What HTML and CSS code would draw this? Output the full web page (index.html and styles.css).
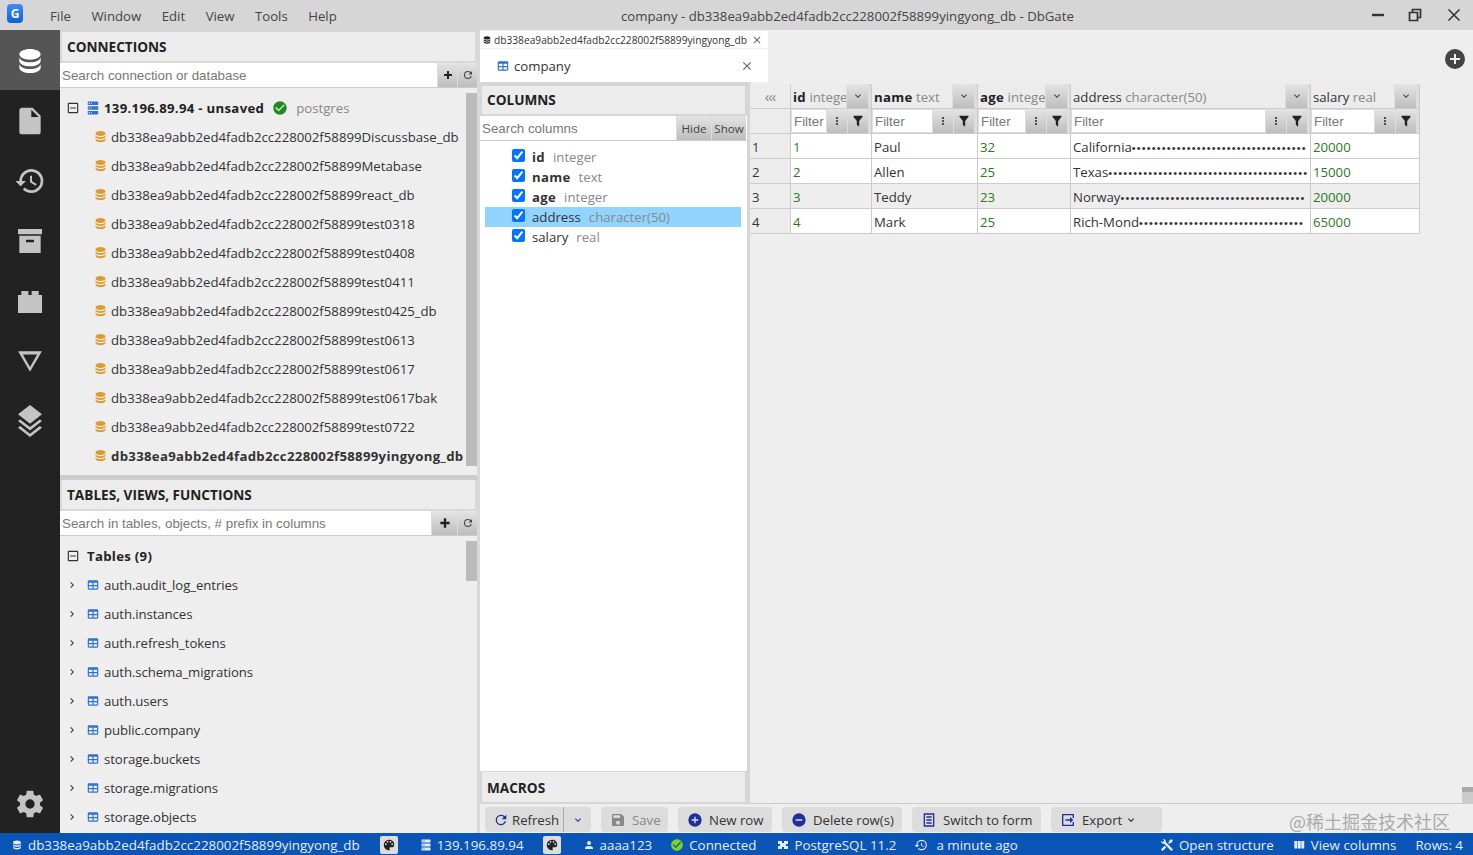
FILE: index.html
```html
<!DOCTYPE html>
<html lang="en">

<head>
    <meta charset="UTF-8">
    <title>company - DbGate</title>
    <link rel="stylesheet" href="styles.css">
</head>

<body>
    <svg class="sprite" xmlns="http://www.w3.org/2000/svg">
        <symbol id="i-database" viewBox="0 0 24 24"><path d="M12,3C7.58,3 4,4.79 4,7C4,9.21 7.58,11 12,11C16.42,11 20,9.21 20,7C20,4.79 16.42,3 12,3M4,9V12C4,14.21 7.58,16 12,16C16.42,16 20,14.21 20,12V9C20,11.21 16.42,13 12,13C7.58,13 4,11.21 4,9M4,14V17C4,19.21 7.58,21 12,21C16.42,21 20,19.21 20,17V14C20,16.21 16.42,18 12,18C7.58,18 4,16.21 4,14Z"/></symbol>
        <symbol id="i-file" viewBox="0 0 24 24"><path d="M13,9V3.5L18.5,9M6,2C4.89,2 4,2.89 4,4V20A2,2 0 0,0 6,22H18A2,2 0 0,0 20,20V8L14,2H6Z"/></symbol>
        <symbol id="i-history" viewBox="0 0 24 24"><path d="M13.5,8H12V13L16.28,15.54L17,14.33L13.5,12.25V8M13,3A9,9 0 0,0 4,12H1L4.96,16.03L9,12H6A7,7 0 0,1 13,5A7,7 0 0,1 20,12A7,7 0 0,1 13,19C11.07,19 9.32,18.21 8.06,16.94L6.64,18.36C8.27,20 10.5,21 13,21A9,9 0 0,0 22,12A9,9 0 0,0 13,3"/></symbol>
        <symbol id="i-archive" viewBox="0 0 24 24"><path d="M3,3H21V7H3V3M4,8H20V21H4V8M9.5,11A0.5,0.5 0 0,0 9,11.5V13H15V11.5A0.5,0.5 0 0,0 14.5,11H9.5Z"/></symbol>
        <symbol id="i-brick" viewBox="0 0 24 24"><path d="M3 7.5H5.5V4.5H10.8V7.5H13.2V4.5H18.5V7.5H21V21H3Z"/></symbol>
        <symbol id="i-triangle" viewBox="0 0 24 24"><path d="M12,22L1,3H23M12,17.5L18.6,6H5.4"/></symbol>
        <symbol id="i-layers" viewBox="0 0 24 24"><path d="M12 14L3 7L12 0L21 7Z M12 16.54L19.37 10.8L21 12.07L12 19.07L3 12.07L4.62 10.81Z M12 21.47L19.37 15.73L21 17L12 24L3 17L4.62 15.74Z"/></symbol>
        <symbol id="i-cog" viewBox="0 0 24 24"><path d="M12,15.5A3.5,3.5 0 0,1 8.5,12A3.5,3.5 0 0,1 12,8.5A3.5,3.5 0 0,1 15.5,12A3.5,3.5 0 0,1 12,15.5M19.43,12.97C19.47,12.65 19.5,12.33 19.5,12C19.5,11.67 19.47,11.34 19.43,11L21.54,9.37C21.73,9.22 21.78,8.95 21.66,8.73L19.66,5.27C19.54,5.05 19.27,4.96 19.05,5.05L16.56,6.05C16.04,5.66 15.5,5.32 14.87,5.07L14.5,2.42C14.46,2.18 14.25,2 14,2H10C9.75,2 9.54,2.18 9.5,2.42L9.13,5.07C8.5,5.32 7.96,5.66 7.44,6.05L4.95,5.05C4.73,4.96 4.46,5.05 4.34,5.27L2.34,8.73C2.21,8.95 2.27,9.22 2.46,9.37L4.57,11C4.53,11.34 4.5,11.67 4.5,12C4.5,12.33 4.53,12.65 4.57,12.97L2.46,14.63C2.27,14.78 2.21,15.05 2.34,15.27L4.34,18.73C4.46,18.95 4.73,19.03 4.95,18.95L7.44,17.94C7.96,18.34 8.5,18.68 9.13,18.93L9.5,21.58C9.54,21.82 9.75,22 10,22H14C14.25,22 14.46,21.82 14.5,21.58L14.87,18.93C15.5,18.67 16.04,18.34 16.56,17.94L19.05,18.95C19.27,19.03 19.54,18.95 19.66,18.73L21.66,15.27C21.78,15.05 21.73,14.78 21.54,14.63L19.43,12.97Z"/></symbol>
        <symbol id="i-table" viewBox="0 0 24 24"><path d="M5,4H19A2,2 0 0,1 21,6V18A2,2 0 0,1 19,20H5A2,2 0 0,1 3,18V6A2,2 0 0,1 5,4M5,8V12H11V8H5M13,8V12H19V8H13M5,14V18H11V14H5M13,14V18H19V14H13Z"/></symbol>
        <symbol id="i-server" viewBox="0 0 24 24"><path d="M4,1H20A1,1 0 0,1 21,2V6A1,1 0 0,1 20,7H4A1,1 0 0,1 3,6V2A1,1 0 0,1 4,1M4,9H20A1,1 0 0,1 21,10V14A1,1 0 0,1 20,15H4A1,1 0 0,1 3,14V10A1,1 0 0,1 4,9M4,17H20A1,1 0 0,1 21,18V22A1,1 0 0,1 20,23H4A1,1 0 0,1 3,22V18A1,1 0 0,1 4,17M9,5H10V3H9V5M9,13H10V11H9V13M9,21H10V19H9V21M5,3V5H7V3H5M5,11V13H7V11H5M5,19V21H7V19H5Z"/></symbol>
        <symbol id="i-check" viewBox="0 0 24 24"><path d="M12 2C6.5 2 2 6.5 2 12S6.5 22 12 22 22 17.5 22 12 17.5 2 12 2M10 17L5 12L6.41 10.59L10 14.17L17.59 6.58L19 8L10 17Z"/></symbol>
        <symbol id="i-minusbox" viewBox="0 0 24 24"><path d="M19,3H5C3.89,3 3,3.89 3,5V19A2,2 0 0,0 5,21H19A2,2 0 0,0 21,19V5C21,3.89 20.1,3 19,3M19,5V19H5V5H19M17,11H7V13H17V11Z"/></symbol>
        <symbol id="i-right" viewBox="0 0 24 24"><path d="M8.59,16.58L13.17,12L8.59,7.41L10,6L16,12L10,18L8.59,16.58Z"/></symbol>
        <symbol id="i-down" viewBox="0 0 24 24"><path d="M7.41,8.58L12,13.17L16.59,8.58L18,10L12,16L6,10L7.41,8.58Z"/></symbol>
        <symbol id="i-plus" viewBox="0 0 24 24"><path d="M20 14H14V20H10V14H4V10H10V4H14V10H20V14Z"/></symbol>
        <symbol id="i-refresh" viewBox="0 0 24 24"><path d="M17.65,6.35C16.2,4.9 14.21,4 12,4A8,8 0 0,0 4,12A8,8 0 0,0 12,20C15.73,20 18.84,17.45 19.73,14H17.65C16.83,16.33 14.61,18 12,18A6,6 0 0,1 6,12A6,6 0 0,1 12,6C13.66,6 15.14,6.69 16.22,7.78L13,11H20V4L17.65,6.35Z"/></symbol>
        <symbol id="i-dots" viewBox="0 0 24 24"><path d="M12,16A2,2 0 0,1 14,18A2,2 0 0,1 12,20A2,2 0 0,1 10,18A2,2 0 0,1 12,16M12,10A2,2 0 0,1 14,12A2,2 0 0,1 12,14A2,2 0 0,1 10,12A2,2 0 0,1 12,10M12,4A2,2 0 0,1 14,6A2,2 0 0,1 12,8A2,2 0 0,1 10,6A2,2 0 0,1 12,4Z"/></symbol>
        <symbol id="i-filter" viewBox="0 0 24 24"><path d="M14,12V19.88C14.04,20.18 13.94,20.5 13.71,20.71C13.32,21.1 12.69,21.1 12.3,20.71L10.29,18.7C10.06,18.47 9.96,18.16 10,17.87V12H9.97L4.21,4.62C3.87,4.19 3.95,3.56 4.38,3.22C4.57,3.08 4.78,3 5,3V3H19V3C19.22,3 19.43,3.08 19.62,3.22C20.05,3.56 20.13,4.19 19.79,4.62L14.03,12H14Z"/></symbol>
        <symbol id="i-close" viewBox="0 0 24 24"><path d="M19,6.41L17.59,5L12,10.59L6.41,5L5,6.41L10.59,12L5,17.59L6.41,19L12,13.41L17.59,19L19,17.59L13.41,12L19,6.41Z"/></symbol>
        <symbol id="i-pluscircle" viewBox="0 0 24 24"><path d="M17,13H13V17H11V13H7V11H11V7H13V11H17M12,2A10,10 0 0,0 2,12A10,10 0 0,0 12,22A10,10 0 0,0 22,12A10,10 0 0,0 12,2Z"/></symbol>
        <symbol id="i-minuscircle" viewBox="0 0 24 24"><path d="M17,13H7V11H17M12,2A10,10 0 0,0 2,12A10,10 0 0,0 12,22A10,10 0 0,0 22,12A10,10 0 0,0 12,2Z"/></symbol>
        <symbol id="i-save" viewBox="0 0 24 24"><path d="M15,9H5V5H15M12,19A3,3 0 0,1 9,16A3,3 0 0,1 12,13A3,3 0 0,1 15,16A3,3 0 0,1 12,19M17,3H5C3.89,3 3,3.9 3,5V19A2,2 0 0,0 5,21H19A2,2 0 0,0 21,19V7L17,3Z"/></symbol>
        <symbol id="i-form" viewBox="0 0 24 24"><path fill-rule="evenodd" d="M4 2H20V22H4ZM6 4V20H18V4ZM8 6.5H16V8.5H8ZM8 11H16V13H8ZM8 15.5H16V17.5H8Z"/></symbol>
        <symbol id="i-export" viewBox="0 0 24 24"><path d="M3 3H21V9H19V5H5V19H19V15H21V21H3ZM15 7.5L20 12L15 16.5V13H8V11H15Z"/></symbol>
        <symbol id="i-palette" viewBox="0 0 24 24"><path d="M17.5,12A1.5,1.5 0 0,1 16,10.5A1.5,1.5 0 0,1 17.5,9A1.5,1.5 0 0,1 19,10.5A1.5,1.5 0 0,1 17.5,12M14.5,8A1.5,1.5 0 0,1 13,6.5A1.5,1.5 0 0,1 14.5,5A1.5,1.5 0 0,1 16,6.5A1.5,1.5 0 0,1 14.5,8M9.5,8A1.5,1.5 0 0,1 8,6.5A1.5,1.5 0 0,1 9.5,5A1.5,1.5 0 0,1 11,6.5A1.5,1.5 0 0,1 9.5,8M6.5,12A1.5,1.5 0 0,1 5,10.5A1.5,1.5 0 0,1 6.5,9A1.5,1.5 0 0,1 8,10.5A1.5,1.5 0 0,1 6.5,12M12,3A9,9 0 0,0 3,12A9,9 0 0,0 12,21A1.5,1.5 0 0,0 13.5,19.5C13.5,19.11 13.35,18.76 13.11,18.5C12.88,18.23 12.73,17.88 12.73,17.5A1.5,1.5 0 0,1 14.23,16H16A5,5 0 0,0 21,11C21,6.58 16.97,3 12,3Z"/></symbol>
        <symbol id="i-account" viewBox="0 0 24 24"><path d="M12,4A4,4 0 0,1 16,8A4,4 0 0,1 12,12A4,4 0 0,1 8,8A4,4 0 0,1 12,4M12,14C16.42,14 20,15.79 20,18V20H4V18C4,15.79 7.58,14 12,14Z"/></symbol>
        <symbol id="i-tools" viewBox="0 0 24 24"><path d="M21.71 20.29L20.29 21.71A1 1 0 0 1 18.88 21.71L7 9.85A3.81 3.81 0 0 1 6 10A4 4 0 0 1 2.22 4.7L4.76 7.24L5.29 6.71L6.71 5.29L7.24 4.76L4.7 2.22A4 4 0 0 1 10 6A3.81 3.81 0 0 1 9.85 7L21.71 18.88A1 1 0 0 1 21.71 20.29M2.29 18.88A1 1 0 0 0 2.29 20.29L3.71 21.71A1 1 0 0 0 5.12 21.71L10.59 16.25L7.76 13.42M20 2L16 4V6L13.83 8.17L15.83 10.17L18 8H20L22 4Z"/></symbol>
        <symbol id="i-columns" viewBox="0 0 24 24"><path d="M16,5V18H21V5M4,18H9V5H4M10,18H15V5H10V18Z"/></symbol>
        <symbol id="i-chip" viewBox="0 0 24 24"><path fill-rule="evenodd" d="M2 4H22V20H2ZM10 4V8H14V4ZM10 16V20H14V16ZM2 10V14H6V10ZM18 10V14H22V10Z"/></symbol>
    </svg>

    <div class="titlebar">
        <div class="logo">G</div>
        <div class="menu">
            <span>File</span>
            <span>Window</span>
            <span>Edit</span>
            <span>View</span>
            <span>Tools</span>
            <span>Help</span>
        </div>
        <div class="wintitle">company - db338ea9abb2ed4fadb2cc228002f58899yingyong_db - DbGate</div>
        <div class="winbtns">
            <svg class="winbtn" viewBox="0 0 14 14"><path d="M1 7H13" stroke-width="2.4"/></svg>
            <svg class="winbtn" viewBox="0 0 14 14"><path d="M1.5 4.5H9.5V12.5H1.5ZM4.5 4V1.5H12.5V9.5H10" stroke-width="1.7"/></svg>
            <svg class="winbtn" viewBox="0 0 14 14"><path d="M1.5 1.5L12.5 12.5M12.5 1.5L1.5 12.5" stroke-width="1.5"/></svg>
        </div>
    </div>

    <div class="app">
        <div class="sidebar">
            <div class="sideItem active"><svg class="icon"><use href="#i-database"/></svg></div>
            <div class="sideItem"><svg class="icon"><use href="#i-file"/></svg></div>
            <div class="sideItem"><svg class="icon"><use href="#i-history"/></svg></div>
            <div class="sideItem"><svg class="icon"><use href="#i-archive"/></svg></div>
            <div class="sideItem"><svg class="icon"><use href="#i-brick"/></svg></div>
            <div class="sideItem tri"><svg class="icon"><use href="#i-triangle"/></svg></div>
            <div class="sideItem"><svg class="icon"><use href="#i-layers"/></svg></div>
            <div class="sideItem cog"><svg class="icon"><use href="#i-cog"/></svg></div>
        </div>

        <div class="leftPanel">
            <div class="widget connWidget">
                <div class="widgetHead">CONNECTIONS</div>
                <div class="searchRow">
                    <input class="searchInput" placeholder="Search connection or database">
                    <button class="grayBtn smallBtn"><svg class="icon i12 dark"><use href="#i-plus"/></svg></button>
                    <button class="grayBtn smallBtn"><svg class="icon i12"><use href="#i-refresh"/></svg></button>
                </div>
                <div class="listWrap">
                    <div class="list">
                        <div class="row">
                            <svg class="icon box"><use href="#i-minusbox"/></svg>
                            <svg class="icon tblIcon"><use href="#i-server"/></svg>
                            <b class="connName">139.196.89.94 - unsaved</b>
                            <svg class="icon okIcon"><use href="#i-check"/></svg>
                            <span class="muted">postgres</span>
                        </div>
                        <div class="row db"><svg class="icon dbIcon"><use href="#i-database"/></svg>db338ea9abb2ed4fadb2cc228002f58899Discussbase_db</div>
                        <div class="row db"><svg class="icon dbIcon"><use href="#i-database"/></svg>db338ea9abb2ed4fadb2cc228002f58899Metabase</div>
                        <div class="row db"><svg class="icon dbIcon"><use href="#i-database"/></svg>db338ea9abb2ed4fadb2cc228002f58899react_db</div>
                        <div class="row db"><svg class="icon dbIcon"><use href="#i-database"/></svg>db338ea9abb2ed4fadb2cc228002f58899test0318</div>
                        <div class="row db"><svg class="icon dbIcon"><use href="#i-database"/></svg>db338ea9abb2ed4fadb2cc228002f58899test0408</div>
                        <div class="row db"><svg class="icon dbIcon"><use href="#i-database"/></svg>db338ea9abb2ed4fadb2cc228002f58899test0411</div>
                        <div class="row db"><svg class="icon dbIcon"><use href="#i-database"/></svg>db338ea9abb2ed4fadb2cc228002f58899test0425_db</div>
                        <div class="row db"><svg class="icon dbIcon"><use href="#i-database"/></svg>db338ea9abb2ed4fadb2cc228002f58899test0613</div>
                        <div class="row db"><svg class="icon dbIcon"><use href="#i-database"/></svg>db338ea9abb2ed4fadb2cc228002f58899test0617</div>
                        <div class="row db"><svg class="icon dbIcon"><use href="#i-database"/></svg>db338ea9abb2ed4fadb2cc228002f58899test0617bak</div>
                        <div class="row db"><svg class="icon dbIcon"><use href="#i-database"/></svg>db338ea9abb2ed4fadb2cc228002f58899test0722</div>
                        <div class="row db"><svg class="icon dbIcon"><use href="#i-database"/></svg><b>db338ea9abb2ed4fadb2cc228002f58899yingyong_db</b></div>
                    </div>
                    <div class="scrollTrack"><div class="thumb thumbConn"></div></div>
                </div>
            </div>

            <div class="widget tableWidget">
                <div class="widgetHead">TABLES, VIEWS, FUNCTIONS</div>
                <div class="searchRow">
                    <input class="searchInput" placeholder="Search in tables, objects, # prefix in columns">
                    <button class="grayBtn plusWide"><svg class="icon i14 dark"><use href="#i-plus"/></svg></button>
                    <button class="grayBtn smallBtn"><svg class="icon i12"><use href="#i-refresh"/></svg></button>
                </div>
                <div class="listWrap">
                    <div class="list">
                        <div class="row">
                            <svg class="icon box"><use href="#i-minusbox"/></svg>
                            <b class="groupName">Tables (9)</b>
                        </div>
                        <div class="row"><svg class="icon chev"><use href="#i-right"/></svg><svg class="icon tblIcon small"><use href="#i-table"/></svg>auth.audit_log_entries</div>
                        <div class="row"><svg class="icon chev"><use href="#i-right"/></svg><svg class="icon tblIcon small"><use href="#i-table"/></svg>auth.instances</div>
                        <div class="row"><svg class="icon chev"><use href="#i-right"/></svg><svg class="icon tblIcon small"><use href="#i-table"/></svg>auth.refresh_tokens</div>
                        <div class="row"><svg class="icon chev"><use href="#i-right"/></svg><svg class="icon tblIcon small"><use href="#i-table"/></svg>auth.schema_migrations</div>
                        <div class="row"><svg class="icon chev"><use href="#i-right"/></svg><svg class="icon tblIcon small"><use href="#i-table"/></svg>auth.users</div>
                        <div class="row"><svg class="icon chev"><use href="#i-right"/></svg><svg class="icon tblIcon small"><use href="#i-table"/></svg>public.company</div>
                        <div class="row"><svg class="icon chev"><use href="#i-right"/></svg><svg class="icon tblIcon small"><use href="#i-table"/></svg>storage.buckets</div>
                        <div class="row"><svg class="icon chev"><use href="#i-right"/></svg><svg class="icon tblIcon small"><use href="#i-table"/></svg>storage.migrations</div>
                        <div class="row"><svg class="icon chev"><use href="#i-right"/></svg><svg class="icon tblIcon small"><use href="#i-table"/></svg>storage.objects</div>
                    </div>
                    <div class="scrollTrack"><div class="thumb thumbTables"></div></div>
                </div>
            </div>
        </div>

        <div class="main">
            <div class="tabBar">
                <div class="tabs">
                    <div class="dbTab">
                        <svg class="icon i10 dark"><use href="#i-database"/></svg>
                        <span class="dbTabName">db338ea9abb2ed4fadb2cc228002f58899yingyong_db</span>
                        <svg class="icon i12 closeIcon"><use href="#i-close"/></svg>
                    </div>
                    <div class="tableTab">
                        <svg class="icon tblIcon small"><use href="#i-table"/></svg>
                        <span>company</span>
                        <svg class="icon i14 closeIcon tabClose"><use href="#i-close"/></svg>
                    </div>
                </div>
                <svg class="icon addTab"><use href="#i-pluscircle"/></svg>
            </div>

            <div class="content">
                <div class="colPanel">
                    <div class="widgetHead colHead">COLUMNS</div>
                    <div class="searchRow colSearch">
                        <input class="searchInput" placeholder="Search columns">
                        <button class="grayBtn textBtn">Hide</button>
                        <button class="grayBtn textBtn">Show</button>
                    </div>
                    <div class="colList">
                        <label class="colRow"><input type="checkbox" checked><b>id</b><span class="muted">integer</span></label>
                        <label class="colRow"><input type="checkbox" checked><b>name</b><span class="muted">text</span></label>
                        <label class="colRow"><input type="checkbox" checked><b>age</b><span class="muted">integer</span></label>
                        <label class="colRow selected"><input type="checkbox" checked><span>address</span><span class="muted">character(50)</span></label>
                        <label class="colRow"><input type="checkbox" checked><span>salary</span><span class="muted">real</span></label>
                    </div>
                    <div class="widgetHead macroHead">MACROS</div>
                </div>

                <div class="gridPane">
                    <table class="grid">
                        <colgroup>
                            <col class="cRow"><col class="cId"><col class="cName"><col class="cAge"><col class="cAddr"><col class="cSal">
                        </colgroup>
                        <tr class="headRow">
                            <th class="rowHead collapse">&#8249;&#8249;&#8249;</th>
                            <th><div class="hc"><span class="hcLabel"><b>id</b> <i>integer</i></span><button class="grayBtn hcBtn"><svg class="icon i12"><use href="#i-down"/></svg></button></div></th>
                            <th><div class="hc"><span class="hcLabel"><b>name</b> <i>text</i></span><button class="grayBtn hcBtn"><svg class="icon i12"><use href="#i-down"/></svg></button></div></th>
                            <th><div class="hc"><span class="hcLabel"><b>age</b> <i>integer</i></span><button class="grayBtn hcBtn"><svg class="icon i12"><use href="#i-down"/></svg></button></div></th>
                            <th><div class="hc"><span class="hcLabel">address <i>character(50)</i></span><button class="grayBtn hcBtn"><svg class="icon i12"><use href="#i-down"/></svg></button></div></th>
                            <th><div class="hc"><span class="hcLabel">salary <i>real</i></span><button class="grayBtn hcBtn"><svg class="icon i12"><use href="#i-down"/></svg></button></div></th>
                        </tr>
                        <tr class="filterRow">
                            <th class="rowHead"></th>
                            <th><div class="fc"><input placeholder="Filter"><button class="grayBtn"><svg class="icon i12 dark"><use href="#i-dots"/></svg></button><button class="grayBtn"><svg class="icon i14 dark"><use href="#i-filter"/></svg></button></div></th>
                            <th><div class="fc"><input placeholder="Filter"><button class="grayBtn"><svg class="icon i12 dark"><use href="#i-dots"/></svg></button><button class="grayBtn"><svg class="icon i14 dark"><use href="#i-filter"/></svg></button></div></th>
                            <th><div class="fc"><input placeholder="Filter"><button class="grayBtn"><svg class="icon i12 dark"><use href="#i-dots"/></svg></button><button class="grayBtn"><svg class="icon i14 dark"><use href="#i-filter"/></svg></button></div></th>
                            <th><div class="fc"><input placeholder="Filter"><button class="grayBtn"><svg class="icon i12 dark"><use href="#i-dots"/></svg></button><button class="grayBtn"><svg class="icon i14 dark"><use href="#i-filter"/></svg></button></div></th>
                            <th><div class="fc"><input placeholder="Filter"><button class="grayBtn"><svg class="icon i12 dark"><use href="#i-dots"/></svg></button><button class="grayBtn"><svg class="icon i14 dark"><use href="#i-filter"/></svg></button></div></th>
                        </tr>
                        <tr>
                            <td class="rowHead">1</td><td class="num">1</td><td>Paul</td><td class="num">32</td>
                            <td><div class="clip">California<span class="dots">•••••••••••••••••••••••••••••••••••</span></div></td><td class="num">20000</td>
                        </tr>
                        <tr>
                            <td class="rowHead">2</td><td class="num">2</td><td>Allen</td><td class="num">25</td>
                            <td><div class="clip">Texas<span class="dots">••••••••••••••••••••••••••••••••••••••••</span></div></td><td class="num">15000</td>
                        </tr>
                        <tr class="alt">
                            <td class="rowHead">3</td><td class="num">3</td><td>Teddy</td><td class="num">23</td>
                            <td><div class="clip">Norway<span class="dots">•••••••••••••••••••••••••••••••••••••</span></div></td><td class="num">20000</td>
                        </tr>
                        <tr>
                            <td class="rowHead">4</td><td class="num">4</td><td>Mark</td><td class="num">25</td>
                            <td><div class="clip">Rich-Mond<span class="dots">•••••••••••••••••••••••••••••••••</span></div></td><td class="num">65000</td>
                        </tr>
                    </table>
                    <div class="gridThumb"></div>
                </div>
            </div>

            <div class="toolbar">
                <div class="tbBtn splitBtn">
                    <span class="tbMain"><svg class="icon i16 navy"><use href="#i-refresh"/></svg>Refresh</span>
                    <span class="tbDrop"><svg class="icon i12 navy"><use href="#i-down"/></svg></span>
                </div>
                <div class="tbBtn saveBtn disabled"><svg class="icon i16"><use href="#i-save"/></svg>Save</div>
                <div class="tbBtn newBtn"><svg class="icon i16 navy"><use href="#i-pluscircle"/></svg>New row</div>
                <div class="tbBtn delBtn"><svg class="icon i16 navy"><use href="#i-minuscircle"/></svg>Delete row(s)</div>
                <div class="tbBtn formBtn"><svg class="icon i16 navy"><use href="#i-form"/></svg>Switch to form</div>
                <div class="tbBtn exportBtn"><svg class="icon i16 navy"><use href="#i-export"/></svg>Export<svg class="icon i12 dark"><use href="#i-down"/></svg></div>
            </div>
            <div class="watermark">@稀土掘金技术社区</div>
        </div>
    </div>

    <div class="statusbar">
        <span class="st st1"><svg class="icon i12"><use href="#i-database"/></svg>db338ea9abb2ed4fadb2cc228002f58899yingyong_db</span>
        <span class="chip"><svg class="icon i14"><use href="#i-palette"/></svg></span>
        <span class="st st2"><svg class="icon i12"><use href="#i-server"/></svg>139.196.89.94</span>
        <span class="chip"><svg class="icon i14"><use href="#i-palette"/></svg></span>
        <span class="st st3"><svg class="icon i12"><use href="#i-account"/></svg>aaaa123</span>
        <span class="st st4"><svg class="icon i14 okLight"><use href="#i-check"/></svg>Connected</span>
        <span class="st st5"><svg class="icon i12"><use href="#i-chip"/></svg>PostgreSQL 11.2</span>
        <span class="st st6"><svg class="icon i14"><use href="#i-history"/></svg>a minute ago</span>
        <span class="st st7"><svg class="icon i14"><use href="#i-tools"/></svg>Open structure</span>
        <span class="st st8"><svg class="icon i14"><use href="#i-columns"/></svg>View columns</span>
        <span class="st st9">Rows: 4</span>
    </div>
</body>

</html>
```

FILE: styles.css
```css
* {
    box-sizing: border-box;
}

html,
body {
    margin: 0;
    height: 100%;
    overflow: hidden;
}

body {
    display: flex;
    flex-direction: column;
    font-family: 'Open Sans', 'Noto Sans', sans-serif;
    font-size: 13.2px;
    color: #333;
    background-color: #eee;
}

b {
    font-weight: 700;
    letter-spacing: 0.3px;
}

.sprite {
    display: none;
}

.icon {
    display: block;
    flex: none;
    width: 24px;
    height: 24px;
    fill: currentColor;
}

.i10 { width: 10px; height: 10px; }
.i12 { width: 12px; height: 12px; }
.i14 { width: 14px; height: 14px; }
.i16 { width: 16px; height: 16px; }
.dark { color: #222; }
.navy { color: #1f2f9c; }

/* title bar */
.titlebar {
    height: 30px;
    flex: none;
    display: flex;
    align-items: center;
    padding-top: 2px;
    background-color: #d6d6d6;
    color: #444;
}

.logo {
    width: 16px;
    height: 19px;
    margin: -5px 0 0 7px;
    border-radius: 4px;
    background: linear-gradient(#3d8ff0, #0c62d6);
    color: #fff;
    font-weight: 700;
    font-size: 12px;
    line-height: 20px;
    text-align: center;
}

.menu {
    display: flex;
    gap: 20.5px;
    margin-left: 27px;
    width: 290px;
}

.wintitle {
    margin-left: 281px;
}

.winbtns {
    margin-left: auto;
    display: flex;
    gap: 25px;
    padding-right: 12px;
    margin-top: -2px;
}

.winbtn {
    width: 14px;
    height: 14px;
    fill: none;
    stroke: #333;
}

.winbtn:first-child {
    margin-right: -2px;
}

/* main layout */
.app {
    flex: 1;
    min-height: 0;
    display: flex;
    position: relative;
}

.sidebar {
    width: 60px;
    flex: none;
    display: flex;
    flex-direction: column;
    background-color: #222;
    color: #c4c4c4;
}

.sideItem {
    height: 60px;
    flex: none;
    display: flex;
    align-items: center;
    justify-content: center;
    padding-top: 2px;
}

.sideItem .icon {
    width: 32px;
    height: 32px;
}

.sideItem.tri .icon {
    width: 26px;
    height: 26px;
}

.sideItem.active {
    background-color: #555;
    color: #fff;
}

.cog {
    margin-top: auto;
}

.leftPanel {
    width: 420px;
    flex: none;
    display: flex;
    flex-direction: column;
    background-color: #d8d8d8;
    padding-right: 3px;
}

.widget {
    display: flex;
    flex-direction: column;
    min-height: 0;
}

.connWidget {
    height: 450px;
    flex: none;
    border-bottom: 5px solid #ccc;
}

.tableWidget {
    flex: 1;
}

.widgetHead {
    height: 29px;
    flex: none;
    margin: 1px 2px 2px;
    padding-left: 5px;
    display: flex;
    align-items: center;
    background-color: #ececec;
    color: #222;
    font-weight: 700;
    font-size: 13.6px;
}

.connWidget .widgetHead {
    margin-top: 2px;
}

.tableWidget .widgetHead {
    margin-top: 0;
}

.searchRow {
    height: 25px;
    flex: none;
    display: flex;
    border-bottom: 1px solid #ccc;
    background-color: #fff;
}

.searchInput {
    flex: 1;
    min-width: 0;
    height: 24px;
    border: none;
    outline: none;
    padding: 0 2px;
    font-family: 'Liberation Sans', Arial, sans-serif;
    font-size: 13.33px;
    background-color: #fff;
}

.searchInput::placeholder,
.fc input::placeholder {
    color: #777;
}

.grayBtn {
    display: flex;
    align-items: center;
    justify-content: center;
    padding: 0;
    border: none;
    border-left: 1px solid #ddd;
    background: linear-gradient(#e4e4e4, #bdbdbd);
    color: #444;
}

.smallBtn {
    width: 20px;
}

.plusWide {
    width: 26px;
}

.textBtn {
    width: 35px;
    font-family: 'Open Sans', sans-serif;
    font-size: 11.6px;
    color: #444;
}

.listWrap {
    flex: 1;
    min-height: 0;
    display: flex;
    background-color: #eee;
    overflow: hidden;
}

.list {
    flex: 1;
    min-width: 0;
    padding-top: 5px;
}

.tableWidget .row {
    letter-spacing: -0.08px;
}

.row {
    height: 29px;
    display: flex;
    align-items: center;
    padding-left: 6px;
    white-space: nowrap;
}

.row.db {
    padding-left: 33px;
}

.box {
    width: 14px;
    height: 14px;
    color: #333;
    margin-right: 6px;
}

.chev {
    width: 12px;
    height: 12px;
    margin-right: 8px;
    color: #333;
}

.tblIcon {
    width: 14px;
    height: 14px;
    color: #2f72d4;
    margin-right: 4px;
}

.tblIcon.small {
    width: 14px;
    height: 14px;
    margin-right: 4px;
}

.connName {
    margin-right: 8px;
    color: #222;
}

.groupName {
    margin-left: 1px;
    color: #222;
}

.okIcon {
    width: 16px;
    height: 16px;
    margin-right: 8px;
    color: #1f8a1f;
}

.muted {
    color: #888;
}

.dbIcon {
    width: 15px;
    height: 15px;
    margin-right: 3px;
    color: #e09a2b;
}

.scrollTrack {
    width: 11px;
    flex: none;
    padding-top: 5px;
}

.thumb {
    background-color: #bbb;
}

.thumbConn {
    height: 373px;
}

.thumbTables {
    height: 40px;
}

/* right side */
.main {
    flex: 1;
    min-width: 0;
    display: flex;
    flex-direction: column;
    position: relative;
}

.tabBar {
    height: 52px;
    flex: none;
    display: flex;
    align-items: flex-end;
    justify-content: space-between;
}

.tabs {
    width: 288px;
}

.dbTab {
    height: 17px;
    margin-bottom: 1px;
    display: flex;
    align-items: center;
    gap: 2px;
    padding-left: 2px;
    background-color: #fff;
    font-size: 10.2px;
    white-space: nowrap;
}

.dbTabName {
    margin-right: 2px;
}

.closeIcon {
    color: #666;
}

.tableTab {
    height: 33px;
    display: flex;
    align-items: center;
    padding-left: 16px;
    gap: 0;
    background-color: #fff;
}

.tabClose {
    margin-left: auto;
    margin-right: 14px;
}

.addTab {
    margin: 0 6px 11px 0;
    color: #444;
}

.content {
    flex: 1;
    min-height: 0;
    display: flex;
}

.colPanel {
    width: 270px;
    flex: none;
    display: flex;
    flex-direction: column;
    background-color: #d6d6d6;
    border-top: 3px solid #d6d6d6;
    border-right: 3px solid #d6d6d6;
}

.colHead {
    height: 28px;
    padding-bottom: 2px;
}

.colSearch {
    height: 25px;
    padding-right: 1px;
}

.colList {
    flex: 1;
    min-height: 0;
    background-color: #fff;
    padding: 6px 6px 0 5px;
}

.colRow {
    height: 20px;
    display: flex;
    align-items: center;
    padding-left: 27px;
    gap: 8px;
}

.colRow input {
    margin: 0 -1px 3px 0;
    width: 13px;
    height: 13px;
}

.colRow.selected {
    background-color: #91d5ff;
}

.macroHead {
    height: 30px;
    margin: 1px 2px 2px;
}

.gridPane {
    flex: 1;
    min-width: 0;
    padding-top: 2px;
    border-bottom: 1px solid #ccc;
    position: relative;
}

.gridThumb {
    position: absolute;
    right: 0;
    bottom: 0;
    width: 11px;
    height: 16px;
    background: linear-gradient(#aaa 5px, #ccc 5px);
}

.grid {
    table-layout: fixed;
    width: 670px;
    border-collapse: separate;
    border-spacing: 0;
}

.cRow { width: 41px; }
.cId { width: 81px; }
.cName { width: 106px; }
.cAge { width: 93px; }
.cAddr { width: 240px; }
.cSal { width: 109px; }

.grid tr {
    height: 25px;
}

.grid th,
.grid td {
    padding: 0;
    font-weight: 400;
    text-align: left;
    border-right: 1px solid #ccc;
    border-bottom: 1px solid #ccc;
    overflow: hidden;
    white-space: nowrap;
}

.grid td {
    padding: 1px 0 0 2px;
    background-color: #fff;
}

.grid tr.alt td {
    background-color: #eee;
}

.grid .rowHead {
    background-color: #ececec;
}

.grid .collapse {
    text-align: center;
    color: #888;
    font-size: 15px;
    letter-spacing: -1px;
    line-height: 20px;
}

.num {
    color: #2a7a1a;
}

.hc {
    height: 24px;
    display: flex;
    padding-right: 3px;
    background-color: #ddd;
}

.hcLabel {
    flex: 1;
    min-width: 0;
    overflow: hidden;
    padding-left: 2px;
    line-height: 26px;
    background-color: #ececec;
}

.hcLabel b {
    color: #222;
}

.hcLabel i {
    font-style: normal;
    color: #888;
}

.hcBtn {
    width: 22px;
    flex: none;
}

.fc {
    height: 24px;
    display: flex;
    padding-right: 3px;
    background-color: #ddd;
}

.fc input {
    flex: 1;
    min-width: 0;
    border: none;
    outline: none;
    padding: 0 2px;
    margin: 1px 0 1px 1px;
    font-family: 'Liberation Sans', Arial, sans-serif;
    font-size: 13.33px;
}

.fc button {
    width: 21px;
    flex: none;
}

.clip {
    overflow: hidden;
}

.dots {
    font-family: 'Liberation Sans', Arial, sans-serif;
    font-size: 11px;
    letter-spacing: 1.15px;
    color: #333;
}

/* toolbar */
.toolbar {
    height: 29px;
    flex: none;
    display: flex;
    align-items: flex-start;
    padding: 3px 0 0 5px;
    gap: 10px;
}

.tbBtn {
    height: 25px;
    display: flex;
    align-items: center;
    border-radius: 4px;
    background-color: #dcdcdc;
    white-space: nowrap;
    gap: 6px;
    padding: 0 9px;
}

.splitBtn {
    width: 106px;
    padding: 0;
    gap: 0;
}

.tbMain {
    width: 79px;
    height: 100%;
    display: flex;
    align-items: center;
    gap: 3px;
    padding-left: 8px;
    border-right: 1px solid #aaa;
}

.tbDrop {
    flex: 1;
    display: flex;
    justify-content: center;
}

.saveBtn { width: 67px; color: #888; }
.newBtn { width: 94px; }
.delBtn { width: 120px; }
.formBtn { width: 129px; }
.exportBtn { width: 111px; }

.exportBtn .i12 {
    margin-left: -3px;
}

.watermark {
    position: absolute;
    left: 809px;
    bottom: 0;
    font-family: 'Noto Sans CJK SC', sans-serif;
    font-size: 18px;
    line-height: 24px;
    color: #aaa;
    white-space: nowrap;
}

/* status bar */
.statusbar {
    height: 22px;
    flex: none;
    display: flex;
    align-items: center;
    padding-top: 1px;
    background-color: #0a55b5;
    color: #e4eeff;
    font-size: 13.36px;
    white-space: nowrap;
}

.st {
    display: flex;
    align-items: center;
    gap: 5px;
}

.chip {
    width: 18px;
    height: 18px;
    display: flex;
    align-items: center;
    justify-content: center;
    border-radius: 2px;
    background-color: #ddd;
    color: #222;
}

.okLight {
    color: #7ed321;
}

.st1 { margin-left: 11px; margin-right: 20px; }
.st2 { margin-left: 22px; margin-right: 19px; }
.st3 { margin-left: 22px; margin-right: 18px; }
.st4 { margin-right: 21px; }
.st5 { margin-right: 18px; }
.st6 { margin-left: 0; gap: 8px; }
.st7 { margin-left: auto; margin-right: 18px; }
.st8 { margin-right: 19px; }
.st9 { margin-right: 10px; }
```
